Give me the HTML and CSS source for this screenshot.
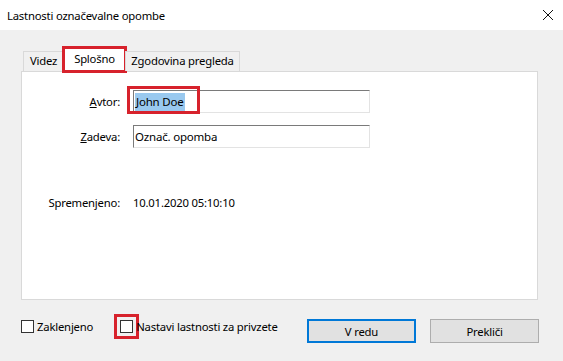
FILE: index.html
```html
<!DOCTYPE html>
<html lang="sl">
<head>
<meta charset="utf-8">
<title>Lastnosti označevalne opombe</title>
<link rel="stylesheet" href="styles.css">
</head>
<body>
<div class="dialog">
  <div class="titlebar">
    <span class="title">Lastnosti označevalne opombe</span>
    <svg class="close" width="12" height="12" viewBox="0 0 12 12" aria-label="Zapri">
      <path d="M1 1 L11 11 M11 1 L1 11" stroke="#111" stroke-width="1" fill="none"/>
    </svg>
  </div>
  <div class="main">
    <div class="tabs">
      <div class="tab t1">Videz</div>
      <div class="tab t2 active">Splošno</div>
      <div class="tab t3">Zgodovina pregleda</div>
    </div>
    <div class="panel">
      <div class="form">
        <label class="lbl"><u>A</u>vtor:</label>
        <div class="field">
          <div class="input"><span class="sel">John Doe</span></div>
          <div class="mark"></div>
        </div>
        <label class="lbl"><u>Z</u>adeva:</label>
        <div class="field">
          <div class="input">Označ. opomba</div>
        </div>
        <span class="lbl modified">Spremenjeno:</span>
        <span class="value modified">10.01.2020 05:10:10</span>
      </div>
    </div>
    <div class="footer">
      <label class="check first"><span class="box"></span>Zaklenjeno</label>
      <label class="check"><span class="box marked"></span>Nastavi lastnosti za privzete</label>
      <div class="buttons">
        <button class="btn default">V redu</button>
        <button class="btn">Prekliči</button>
      </div>
    </div>
  </div>
</div>
</body>
</html>
```
FILE: styles.css
```css
* { box-sizing: border-box; }
html, body { margin: 0; padding: 0; }
body {
  width: 563px;
  height: 361px;
  overflow: hidden;
  background: #f0f0f0;
  font-family: "Noto Sans", "Open Sans", sans-serif;
  font-size: 11.3px;
  letter-spacing: -0.2px;
  color: #000;
}
.dialog { width: 563px; height: 361px; display: flex; flex-direction: column; }
.titlebar {
  height: 30px;
  background: #fff;
  display: flex;
  align-items: center;
  padding-left: 7px;
  padding-right: 9px;
}
.title { flex: 1; }
.close { display: block; }
.main { padding: 17px 25px 0 21px; }
.tabs {
  display: flex;
  align-items: flex-end;
  height: 24px;
  padding-left: 2px;
  position: relative;
  z-index: 1;
}
.tab {
  height: 20px;
  line-height: 18px;
  text-align: center;
  border: 1px solid #d9d9d9;
  border-bottom: none;
  background: #f0f0f0;
  margin-right: -1px;
}
.t1 { width: 41px; }
.t2 { width: 63px; }
.t3 { width: 115px; }
.tab.active {
  height: 25px;
  margin-bottom: -1px;
  background: #fff;
  line-height: 22px;
  outline: 3px solid #d7222c;
  outline-offset: -2px;
}
.panel {
  height: 229px;
  background: #fff;
  border: 1px solid #d9d9d9;
  padding-top: 18px;
}
.form {
  display: grid;
  grid-template-columns: 98px 237px;
  column-gap: 13px;
  row-gap: 12px;
  align-items: center;
}
.lbl { text-align: right; }
.field { position: relative; }
.input {
  height: 23px;
  border: 1px solid #e3e3e3;
  border-top-color: #7a7a7a;
  border-left-color: #7a7a7a;
  background: #fff;
  padding: 2px 1px;
  line-height: 17px;
  font-size: 11.5px;
  white-space: nowrap;
}
.sel { background: #99c9ef; padding: 1px 1px 2px 1px; }
.mark {
  position: absolute;
  left: -6px;
  top: -4px;
  width: 73px;
  height: 28px;
  border: 3px solid #d7222c;
}
.modified { margin-top: 35px; }
.value { text-align: left; }
.footer {
  display: flex;
  align-items: flex-start;
  padding-top: 19px;
}
.check { display: flex; align-items: center; height: 14px; }
.check.first { margin-right: 27px; }
.box {
  width: 13px;
  height: 13px;
  border: 1px solid #333;
  background: #fff;
  margin-right: 3px;
}
.box.marked { outline: 3px solid #d7222c; outline-offset: 3px; }
.buttons { margin-left: auto; display: flex; gap: 14px; margin-right: -1px; }
.btn {
  width: 109px;
  height: 24px;
  font: inherit;
  letter-spacing: inherit;
  color: #000;
  background: #e1e1e1;
  border: 1px solid #adadad;
  padding: 0;
}
.btn.default { border: 2px solid #0078d7; }
```
